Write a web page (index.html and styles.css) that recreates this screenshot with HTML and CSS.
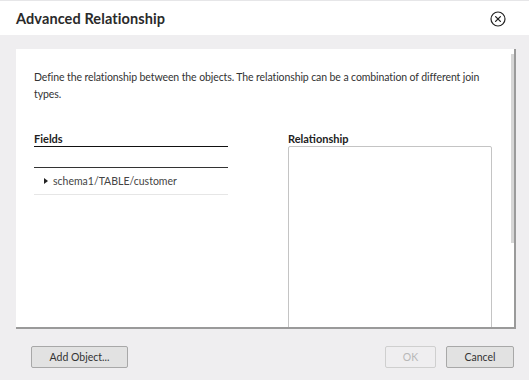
FILE: index.html
```html
<!DOCTYPE html>
<html>
<head>
<meta charset="utf-8">
<link rel="stylesheet" href="styles.css">
</head>
<body>
<div class="header">
  <h1 class="title">Advanced Relationship</h1>
  <svg class="close" width="16" height="16" viewBox="0 0 16 16">
    <circle cx="8" cy="8" r="7" fill="none" stroke="#222" stroke-width="1.2"/>
    <path d="M5.6 5.6 L10.4 10.4 M10.4 5.6 L5.6 10.4" stroke="#222" stroke-width="1.3" stroke-linecap="round"/>
  </svg>
</div>
<div class="main">
  <div class="panel">
    <p class="desc">Define the relationship between the objects. The relationship can be a combination of different join types.</p>
    <div class="cols">
      <div class="fields">
        <div class="col-head fields-head">Fields</div>
        <div class="fields-gap"></div>
        <div class="row"><span class="caret"></span>schema1/TABLE/customer</div>
      </div>
      <div class="rel">
        <div class="col-head">Relationship</div>
        <div class="rel-box"></div>
      </div>
    </div>
    <div class="thumb"></div>
  </div>
</div>
<div class="footer">
  <button class="btn add">Add Object...</button>
  <div class="right">
    <button class="btn ok" disabled>OK</button>
    <button class="btn cancel">Cancel</button>
  </div>
</div>
</body>
</html>
```
FILE: styles.css
```css
html, body {
  margin: 0;
  padding: 0;
}
body {
  background: #efeef0;
  font-family: "Lato", "Open Sans", sans-serif;
  color: #333;
  width: 529px;
  height: 380px;
  overflow: hidden;
}
.header {
  background: #fff;
  border-top: 1px solid #e6e6e8;
  height: 34px;
  display: flex;
  align-items: center;
  justify-content: space-between;
  padding: 0 23px 0 16px;
}
.title {
  margin: 0;
  font-size: 14.5px;
  font-weight: 700;
  color: #2a2a2a;
  letter-spacing: 0.1px;
}
.close {
  display: block;
  margin-top: 2px;
}
.main {
  padding: 14px 13px 0 16px;
}
.panel {
  position: relative;
  background: #fff;
  height: 280px;
  border-right: 2px solid #9a9a9a;
  border-bottom: 2px solid #9a9a9a;
  overflow: hidden;
  padding: 20px 0 0 18px;
  box-sizing: border-box;
}
.desc {
  margin: 0;
  font-size: 10.5px;
  line-height: 17px;
  color: #333;
  width: 468px;
  letter-spacing: -0.1px;
}
.cols {
  display: flex;
  gap: 60px;
  margin-top: 28px;
}
.col-head {
  font-size: 11px;
  font-weight: 700;
  color: #222;
  line-height: 15px;
  height: 15px;
}
.fields {
  width: 194px;
}
.fields-head {
  border-bottom: 1.5px solid #111;
}
.fields-gap {
  height: 20px;
  border-bottom: 1px solid #333;
}
.row {
  height: 26px;
  display: flex;
  align-items: center;
  font-size: 10.5px;
  color: #444;
  border-bottom: 1px solid #e6e6e6;
  padding-left: 10px;
}
.caret {
  width: 0;
  height: 0;
  border-top: 3px solid transparent;
  border-bottom: 3px solid transparent;
  border-left: 4px solid #222;
  margin-right: 5px;
}
.rel {
  width: 204px;
}
.rel-box {
  border: 1px solid #c4c4c4;
  border-radius: 2px;
  height: 220px;
  box-sizing: border-box;
}
.thumb {
  position: absolute;
  right: 0;
  top: 5px;
  width: 3px;
  height: 189px;
  background: #d6d6d6;
}
.footer {
  display: flex;
  justify-content: space-between;
  padding: 17px 15px 0 31px;
}
.right {
  display: flex;
  gap: 10px;
}
.btn {
  font-family: "Lato", "Open Sans", sans-serif;
  font-size: 10.5px;
  height: 22px;
  border-radius: 2px;
  border: 1px solid #a8a8a8;
  background: #e2e2e2;
  color: #333;
  padding: 0;
}
.add {
  width: 97px;
}
.ok {
  width: 51px;
  background: #efeef0;
  border-color: #cfcfcf;
  color: #b8b8b8;
}
.cancel {
  width: 68px;
}
```
